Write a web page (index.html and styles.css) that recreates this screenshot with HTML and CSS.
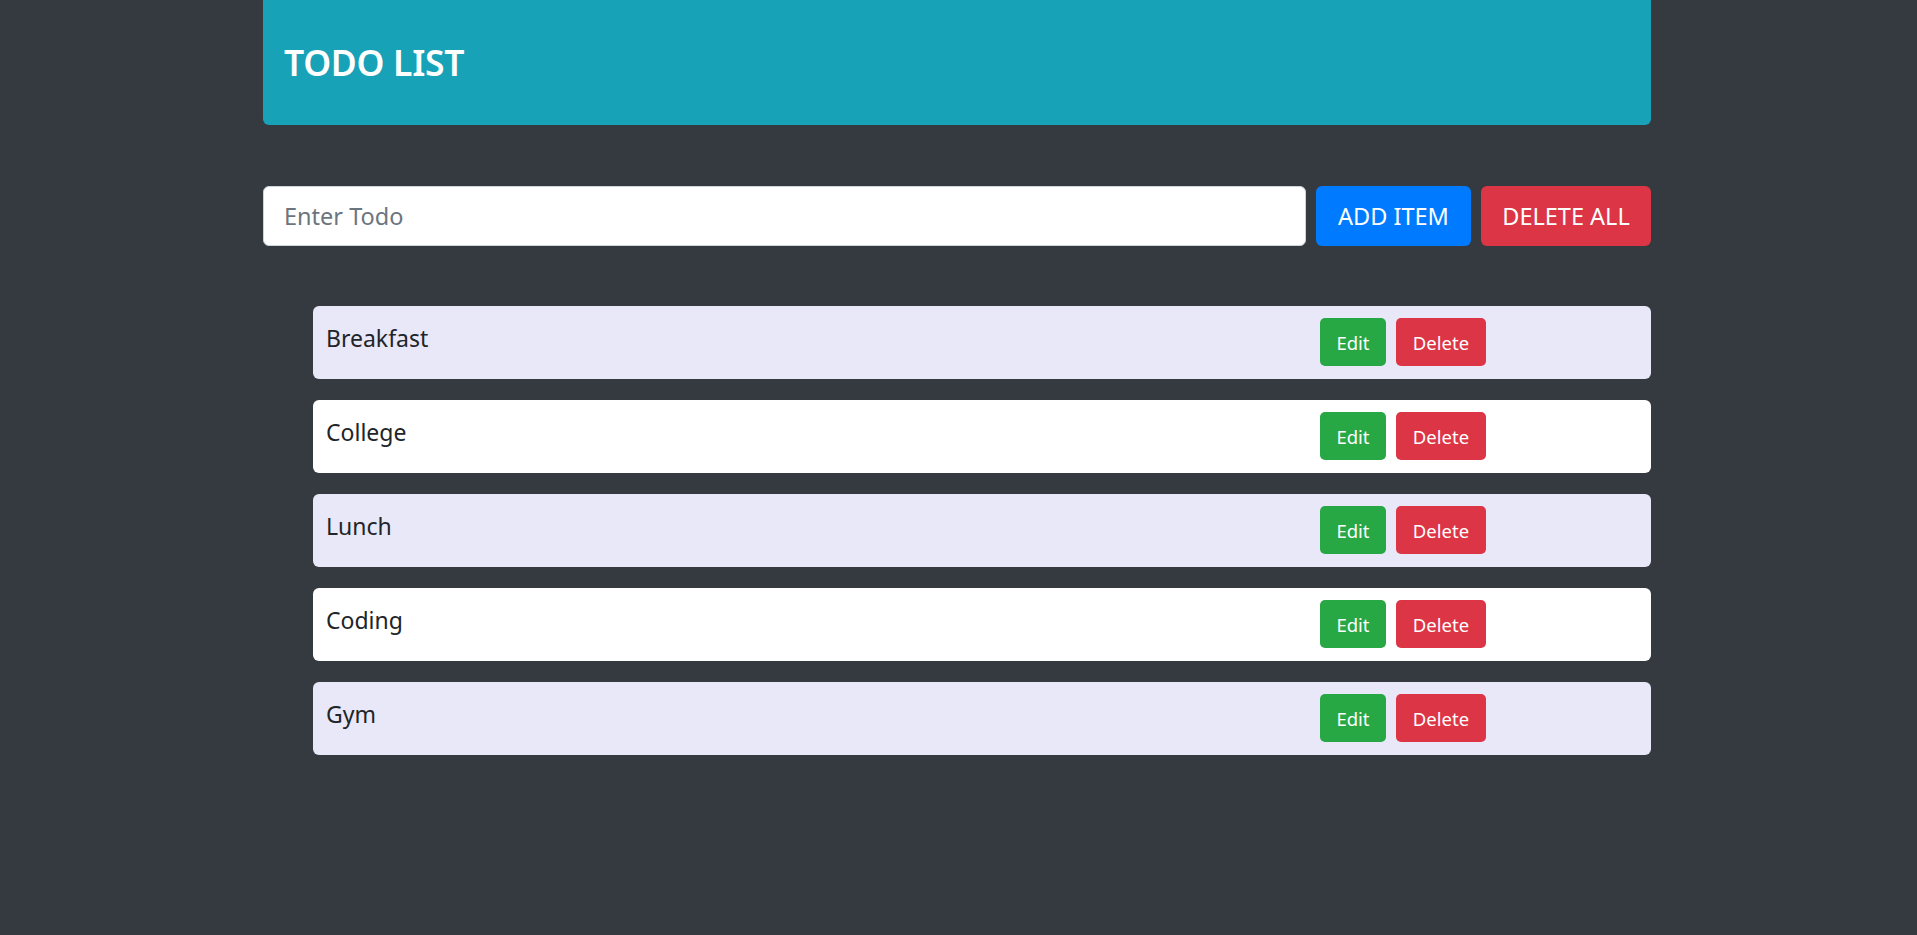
FILE: index.html
```html
<!DOCTYPE html>
<html lang="en">
<head>
<meta charset="utf-8">
<title>Todo List</title>
<link rel="stylesheet" href="styles.css">
</head>
<body>
<div class="container">
  <header class="banner">
    <h2 class="banner-title">TODO LIST</h2>
  </header>
  <form class="entry">
    <input class="entry-input" type="text" placeholder="Enter Todo">
    <button type="button" class="btn-lg btn-blue add">ADD ITEM</button>
    <button type="button" class="btn-lg btn-red clear">DELETE ALL</button>
  </form>
  <ul class="todo-list">
    <li class="todo alt"><span class="todo-text">Breakfast</span><div class="todo-actions"><button class="btn btn-green edit">Edit</button><button class="btn btn-red del">Delete</button></div></li>
    <li class="todo"><span class="todo-text">College</span><div class="todo-actions"><button class="btn btn-green edit">Edit</button><button class="btn btn-red del">Delete</button></div></li>
    <li class="todo alt"><span class="todo-text">Lunch</span><div class="todo-actions"><button class="btn btn-green edit">Edit</button><button class="btn btn-red del">Delete</button></div></li>
    <li class="todo"><span class="todo-text">Coding</span><div class="todo-actions"><button class="btn btn-green edit">Edit</button><button class="btn btn-red del">Delete</button></div></li>
    <li class="todo alt"><span class="todo-text">Gym</span><div class="todo-actions"><button class="btn btn-green edit">Edit</button><button class="btn btn-red del">Delete</button></div></li>
  </ul>
</div>
</body>
</html>
```
FILE: styles.css
```css
* { box-sizing: border-box; }
html, body { margin: 0; padding: 0; }
body {
  background: #343a40;
  font-family: "Noto Sans", "Open Sans", sans-serif;
  color: #212529;
}
.container {
  width: 1388px;
  margin: 0 0 0 263px;
}
.banner {
  height: 125px;
  background: #17a2b8;
  border-radius: 0 0 6px 6px;
  padding-left: 21px;
  display: flex;
  align-items: center;
}
.banner-title {
  margin: 0;
  color: #fff;
  font-size: 35.5px;
  font-weight: 600;
  line-height: 1.2;
  letter-spacing: -0.3px;
}
.entry {
  margin: 61px 0 0;
  display: flex;
  gap: 10px;
  height: 60px;
}
.entry-input {
  flex: 1;
  height: 60px;
  border: 1px solid #ced4da;
  border-radius: 6px;
  background: #fff;
  padding: 0 20px;
  font-family: inherit;
  font-size: 23.5px;
  color: #495057;
  outline: none;
}
.entry-input::placeholder { color: #6c757d; }
.btn-lg {
  height: 60px;
  border: 1px solid transparent;
  border-radius: 6px;
  color: #fff;
  font-family: inherit;
  font-size: 23.5px;
  padding: 0;
  cursor: pointer;
}
.add { width: 155px; }
.clear { width: 170px; }
.btn-blue { background: #007bff; }
.btn-red { background: #dc3545; }
.btn-green { background: #28a745; }
.todo-list {
  list-style: none;
  margin: 60px 0 0 50px;
  padding: 0;
  display: flex;
  flex-direction: column;
  gap: 21px;
}
.todo {
  display: grid;
  grid-template-columns: 994px auto;
  align-items: start;
  padding: 12px 13px 13px;
  background: #fff;
  border-radius: 6px;
}
.todo.alt { background: #e8e8f8; }
.todo-text {
  font-size: 23px;
  line-height: 40px;
  color: #212529;
}
.todo-actions {
  display: flex;
  gap: 10px;
}
.btn {
  height: 48px;
  border: 1px solid transparent;
  border-radius: 5px;
  color: #fff;
  font-family: inherit;
  font-size: 18.5px;
  padding: 0;
  cursor: pointer;
}
.edit { width: 66px; }
.del { width: 90px; }
```
